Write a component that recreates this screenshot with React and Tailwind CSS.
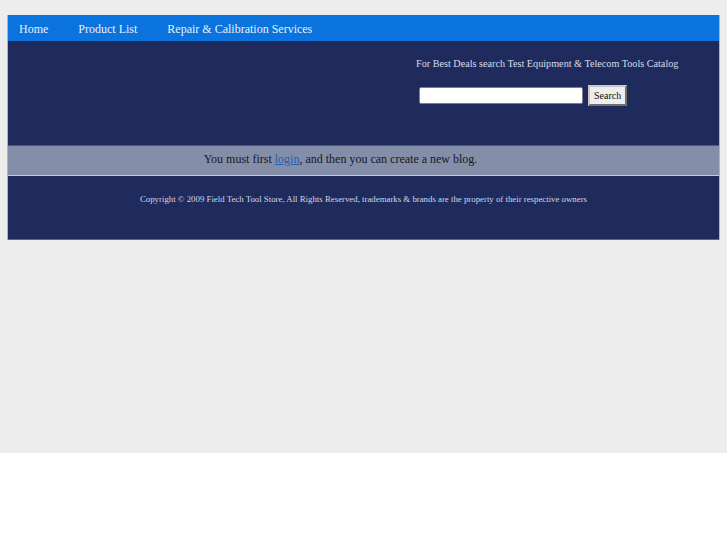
export default function App() {
  return (
    <div className="bg-white min-h-[545px]" style={{ fontFamily: "'Liberation Serif', 'Times New Roman', serif" }}>
      <div className="h-[453px] bg-[#ededed] pt-[15px] px-[7px]">
        <div className="w-[713px] border-x border-[#aab4cc]">
          {/* nav */}
          <div className="h-[26px] bg-[#0b73dd] flex items-center pl-[11px] pt-[2px] gap-[30px] text-[12px] text-[#e8eefa]">
            <span>Home</span>
            <span>Product List</span>
            <span>Repair &amp; Calibration Services</span>
          </div>

          {/* header */}
          <div className="h-[104px] bg-[#1f2b5d] flex">
            <div className="ml-[408px] pt-[15px]">
              <div className="text-[10.2px] text-[#d8dcea] whitespace-nowrap">
                For Best Deals search Test Equipment &amp; Telecom Tools Catalog
              </div>
              <div className="flex items-center mt-[14px] ml-[3px] gap-[5px]">
                <input className="w-[164px] h-[17px] bg-white border border-[#7a7f8c] rounded-[2px]" />
                <button className="h-[21px] px-[4px] bg-[#eeeeee] border-2 border-[#c8c8c8] border-b-[#707070] border-r-[#707070] text-[10px] text-[#111]">
                  Search
                </button>
              </div>
            </div>
          </div>

          {/* message band */}
          <div className="h-[31px] bg-[#858ea8] border-t border-[#4d5780] border-b border-b-[#c6cad8] flex items-center justify-center pr-[46px] pb-[3px] text-[12px] text-[#141826]">
            <span>
              You must first <a href="#" className="text-[#1f5fb4] underline">login</a>, and then you can create a new blog.
            </span>
          </div>

          {/* footer */}
          <div className="h-[64px] bg-[#1f2b5d] border-b border-[#5a6690] pt-[17px] text-center text-[8.8px] text-[#d2d6e4]">
            Copyright © 2009 Field Tech Tool Store, All Rights Reserved, trademarks &amp; brands are the property of their respective owners
          </div>
        </div>
      </div>
    </div>
  );
}
